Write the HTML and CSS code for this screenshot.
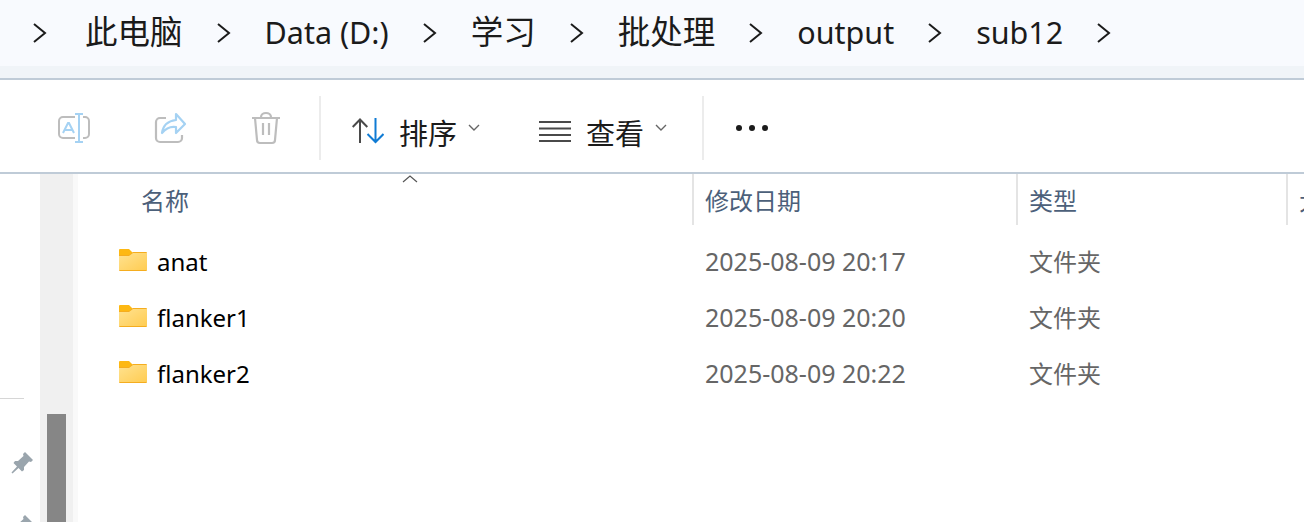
FILE: index.html
```html
<!DOCTYPE html>
<html lang="zh-CN">
<head>
  <meta charset="UTF-8">
  <title>sub12</title>
  <link rel="stylesheet" href="styles.css">
</head>
<body>
  <div class="address-bar">
    <div class="crumbs">
      <svg class="crumb-sep first" viewBox="0 0 14 20"><path d="M1 1l11 9-11 9"/></svg>
      <span class="crumb">此电脑</span>
      <svg class="crumb-sep" viewBox="0 0 14 20"><path d="M1 1l11 9-11 9"/></svg>
      <span class="crumb latin">Data (D:)</span>
      <svg class="crumb-sep" viewBox="0 0 14 20"><path d="M1 1l11 9-11 9"/></svg>
      <span class="crumb">学习</span>
      <svg class="crumb-sep" viewBox="0 0 14 20"><path d="M1 1l11 9-11 9"/></svg>
      <span class="crumb">批处理</span>
      <svg class="crumb-sep" viewBox="0 0 14 20"><path d="M1 1l11 9-11 9"/></svg>
      <span class="crumb latin">output</span>
      <svg class="crumb-sep" viewBox="0 0 14 20"><path d="M1 1l11 9-11 9"/></svg>
      <span class="crumb latin">sub12</span>
      <svg class="crumb-sep" viewBox="0 0 14 20"><path d="M1 1l11 9-11 9"/></svg>
    </div>
  </div>

  <div class="toolbar">
    <div class="icon-btn">
      <svg width="34" height="34" viewBox="0 0 34 34" fill="none">
        <path d="M18 6H6a4 4 0 0 0-4 4v13a4 4 0 0 0 4 4h12M26 6h2a4 4 0 0 1 4 4v13a4 4 0 0 1-4 4h-2" stroke="#bdbdbd" stroke-width="2"/>
        <path d="M22 2v30M18 3h8M18 31h8M6 22l5-10h1l5 10M8 19h7" stroke="#a5d2f3" stroke-width="2"/>
      </svg>
    </div>
    <div class="icon-btn">
      <svg width="34" height="34" viewBox="0 0 34 34" fill="none">
        <path d="M13 7H7a4 4 0 0 0-4 4v16a4 4 0 0 0 4 4h18a4 4 0 0 0 4-4v-3" stroke="#bdbdbd" stroke-width="2.2"/>
        <path d="M23 3l9 10-9 9v-6c-6-1-10 1-14 6 1-8 6-12 14-13z" stroke="#a5d2f3" stroke-width="2.2" stroke-linejoin="round"/>
      </svg>
    </div>
    <div class="icon-btn">
      <svg width="34" height="34" viewBox="0 0 34 34" fill="none" stroke="#bdbdbd" stroke-width="2.2">
        <path d="M3 7h28M12 7V6a5 4 0 0 1 10 0v1M6 7l2 22a3 3 0 0 0 3 3h12a3 3 0 0 0 3-3l2-22M14 12v12M20 12v12"/>
      </svg>
    </div>
    <div class="tool-sep first-sep"></div>
    <div class="tool-btn sort-btn">
      <svg class="tool-icon" width="32" height="26" viewBox="0 0 32 26" fill="none" stroke-width="2">
        <path d="M8 25V1M0.700 9L8 1.500 15.300 9" stroke="#4a4a4a"/>
        <path d="M23.500 0v24M15.500 16l8 8 8-8" stroke="#0f7bd4"/>
      </svg>
      <span class="tool-label">排序</span>
      <svg class="caret" width="12" height="8" viewBox="0 0 12 8"><path d="M1 1l5 5 5-5"/></svg>
    </div>
    <div class="tool-btn view-btn">
      <svg class="tool-icon" width="32" height="21" viewBox="0 0 32 21" fill="none" stroke="#4a4a4a" stroke-width="2">
        <path d="M0 1h32M0 7.500h32M0 14h32M0 20h32"/>
      </svg>
      <span class="tool-label">查看</span>
      <svg class="caret" width="12" height="8" viewBox="0 0 12 8"><path d="M1 1l5 5 5-5"/></svg>
    </div>
    <div class="tool-sep second-sep"></div>
    <div class="more">
      <span class="dot"></span><span class="dot"></span><span class="dot"></span>
    </div>
  </div>

  <div class="main">
    <div class="nav">
      <div class="nav-rule"></div>
      <svg class="pin" width="24" height="24" viewBox="0 0 24 24"><path d="M15 2l8 8-2 2-2-.5-5 5.500v3l-2 1.500-3.500-3.500-6 5.500-1-1 5.500-6-3.500-3.500 1.500-2h3l5.500-5-.5-2z"/></svg>
      <svg class="pin" width="24" height="24" viewBox="0 0 24 24"><path d="M15 2l8 8-2 2-2-.5-5 5.500v3l-2 1.500-3.500-3.500-6 5.500-1-1 5.500-6-3.500-3.500 1.500-2h3l5.500-5-.5-2z"/></svg>
    </div>
    <div class="scroll-track"><div class="scroll-thumb"></div></div>
    <div class="pane-edge"></div>
    <div class="list">
      <div class="list-head">
        <div class="col-head name-head">
          <svg class="sort-caret" width="16" height="9" viewBox="0 0 16 9"><path d="M1 8l7-6 7 6"/></svg>
          名称
        </div>
        <div class="col-head divided">修改日期</div>
        <div class="col-head divided">类型</div>
        <div class="col-head divided">大小</div>
      </div>

      <div class="row">
        <div class="name-cell">
          <svg class="folder" width="28" height="22" viewBox="0 0 28 22"><use href="#folder"/></svg>
          <span>anat</span>
        </div>
        <div class="cell date">2025-08-09 20:17</div>
        <div class="cell">文件夹</div>
      </div>
      <div class="row">
        <div class="name-cell">
          <svg class="folder" width="28" height="22" viewBox="0 0 28 22"><use href="#folder"/></svg>
          <span>flanker1</span>
        </div>
        <div class="cell date">2025-08-09 20:20</div>
        <div class="cell">文件夹</div>
      </div>
      <div class="row">
        <div class="name-cell">
          <svg class="folder" width="28" height="22" viewBox="0 0 28 22"><use href="#folder"/></svg>
          <span>flanker2</span>
        </div>
        <div class="cell date">2025-08-09 20:22</div>
        <div class="cell">文件夹</div>
      </div>
    </div>
  </div>

  <svg class="defs" width="0" height="0">
    <defs>
      <linearGradient id="folderFill" x1="0" y1="0" x2="1" y2="1">
        <stop offset="0" stop-color="#ffe290"/>
        <stop offset="1" stop-color="#ffcc52"/>
      </linearGradient>
      <symbol id="folder" viewBox="0 0 28 22">
        <path d="M1 0h9l4 4v3H0V1a1 1 0 0 1 1-1z" fill="#fdb813"/>
        <path d="M0 6l10 0 4-3h13a1 1 0 0 1 1 1v17a1 1 0 0 1-1 1H1a1 1 0 0 1-1-1z" fill="#f5ad1f"/>
        <path d="M0 7l10 0 4-3h14v17H0z" fill="url(#folderFill)"/>
      </symbol>
    </defs>
  </svg>
</body>
</html>
```

FILE: styles.css
```css
* {
  box-sizing: border-box;
}

html, body {
  height: 100%;
}

body {
  margin: 0;
  height: 522px;
  overflow: hidden;
  display: flex;
  flex-direction: column;
  background-color: #ffffff;
  font-family: "Noto Sans", "Noto Sans CJK SC", sans-serif;
  color: #000000;
}

.defs {
  position: absolute;
}

/* address bar */
.address-bar {
  height: 80px;
  flex: none;
  background-color: #f0f4f8;
  border-bottom: 2px solid #bfcbd7;
}

.crumbs {
  height: 66px;
  display: flex;
  align-items: center;
  background-color: #f8fafe;
  white-space: nowrap;
  color: #1b1b1b;
}

.crumb {
  margin-bottom: 2px;
  font-size: 32.500px;
  line-height: 40px;
}

.crumb.latin {
  font-size: 30.500px;
}

.crumb-sep {
  width: 14px;
  height: 20px;
  flex: none;
  margin: 0 34px 0 34px;
  fill: none;
  stroke: #1b1b1b;
  stroke-width: 2;
}

.crumb-sep.first {
  margin: 0 38px 0 33px;
}

/* command bar */
.toolbar {
  height: 94px;
  flex: none;
  padding: 4px 0 0 26px;
  display: flex;
  align-items: center;
  border-bottom: 2px solid #bfcbd7;
}

.icon-btn {
  width: 96px;
  display: flex;
  justify-content: center;
}

.tool-sep {
  width: 2px;
  height: 64px;
  background-color: #ececec;
}

.first-sep {
  margin-left: 5px;
}

.second-sep {
  margin-left: 35px;
}

.tool-btn {
  display: flex;
  align-items: center;
}

.sort-btn {
  margin-left: 31px;
}

.view-btn {
  margin-left: 59px;
}

.tool-icon {
  margin-top: 6px;
}

.tool-label {
  margin-left: 15px;
  padding-top: 12px;
  font-size: 29px;
  line-height: 36px;
  color: #1b1b1b;
}

.caret {
  margin-left: 11px;
  fill: none;
  stroke: #666666;
  stroke-width: 1.4;
}

.more {
  margin-left: 32px;
  width: 32px;
  display: flex;
  justify-content: space-between;
}

.dot {
  width: 6px;
  height: 6px;
  border-radius: 50%;
  background-color: #1b1b1b;
}

/* body of the window */
.main {
  flex: 1;
  min-height: 0;
  display: flex;
}

.nav {
  width: 40px;
  flex: none;
  padding-top: 224px;
}

.nav-rule {
  width: 24px;
  height: 1px;
  background-color: #d6d6d6;
}

.pin {
  display: block;
  margin: 51px 0 0 10px;
  fill: #9aa5ad;
}

.pin + .pin {
  margin-top: 39px;
}

.scroll-track {
  width: 33px;
  flex: none;
  padding: 240px 7px 0;
  background-color: #f0f0f0;
}

.scroll-thumb {
  height: 100%;
  background-color: #868686;
}

.pane-edge {
  width: 5px;
  flex: none;
  background-color: #f9f9f9;
}

.list {
  flex: 1;
  min-width: 0;
  overflow: hidden;
}

.list-head {
  height: 51px;
  margin-bottom: 9px;
  display: grid;
  grid-template-columns: 614px 324px 270px 100px;
  grid-template-rows: 51px;
}

.col-head {
  font-size: 24px;
  line-height: 53px;
  padding-left: 11px;
  color: #4c607a;
  white-space: nowrap;
}

.col-head.divided {
  border-left: 2px solid #e4e4e4;
}

.name-head {
  position: relative;
  padding-left: 63px;
}

.sort-caret {
  position: absolute;
  left: 324px;
  top: 0;
  fill: none;
  stroke: #555555;
  stroke-width: 1.2;
}

.row {
  height: 56px;
  display: grid;
  grid-template-columns: 614px 324px 270px;
  align-items: center;
}

.name-cell {
  padding-left: 41px;
  display: flex;
  align-items: center;
  gap: 10px;
  font-size: 24px;
  line-height: 32px;
}

.folder {
  flex: none;
  margin-bottom: 4px;
}

.cell {
  padding-left: 13px;
  font-size: 24px;
  line-height: 32px;
  color: #666666;
  white-space: nowrap;
}

.cell.date {
  margin-bottom: 2px;
  font-size: 25px;
}
```
